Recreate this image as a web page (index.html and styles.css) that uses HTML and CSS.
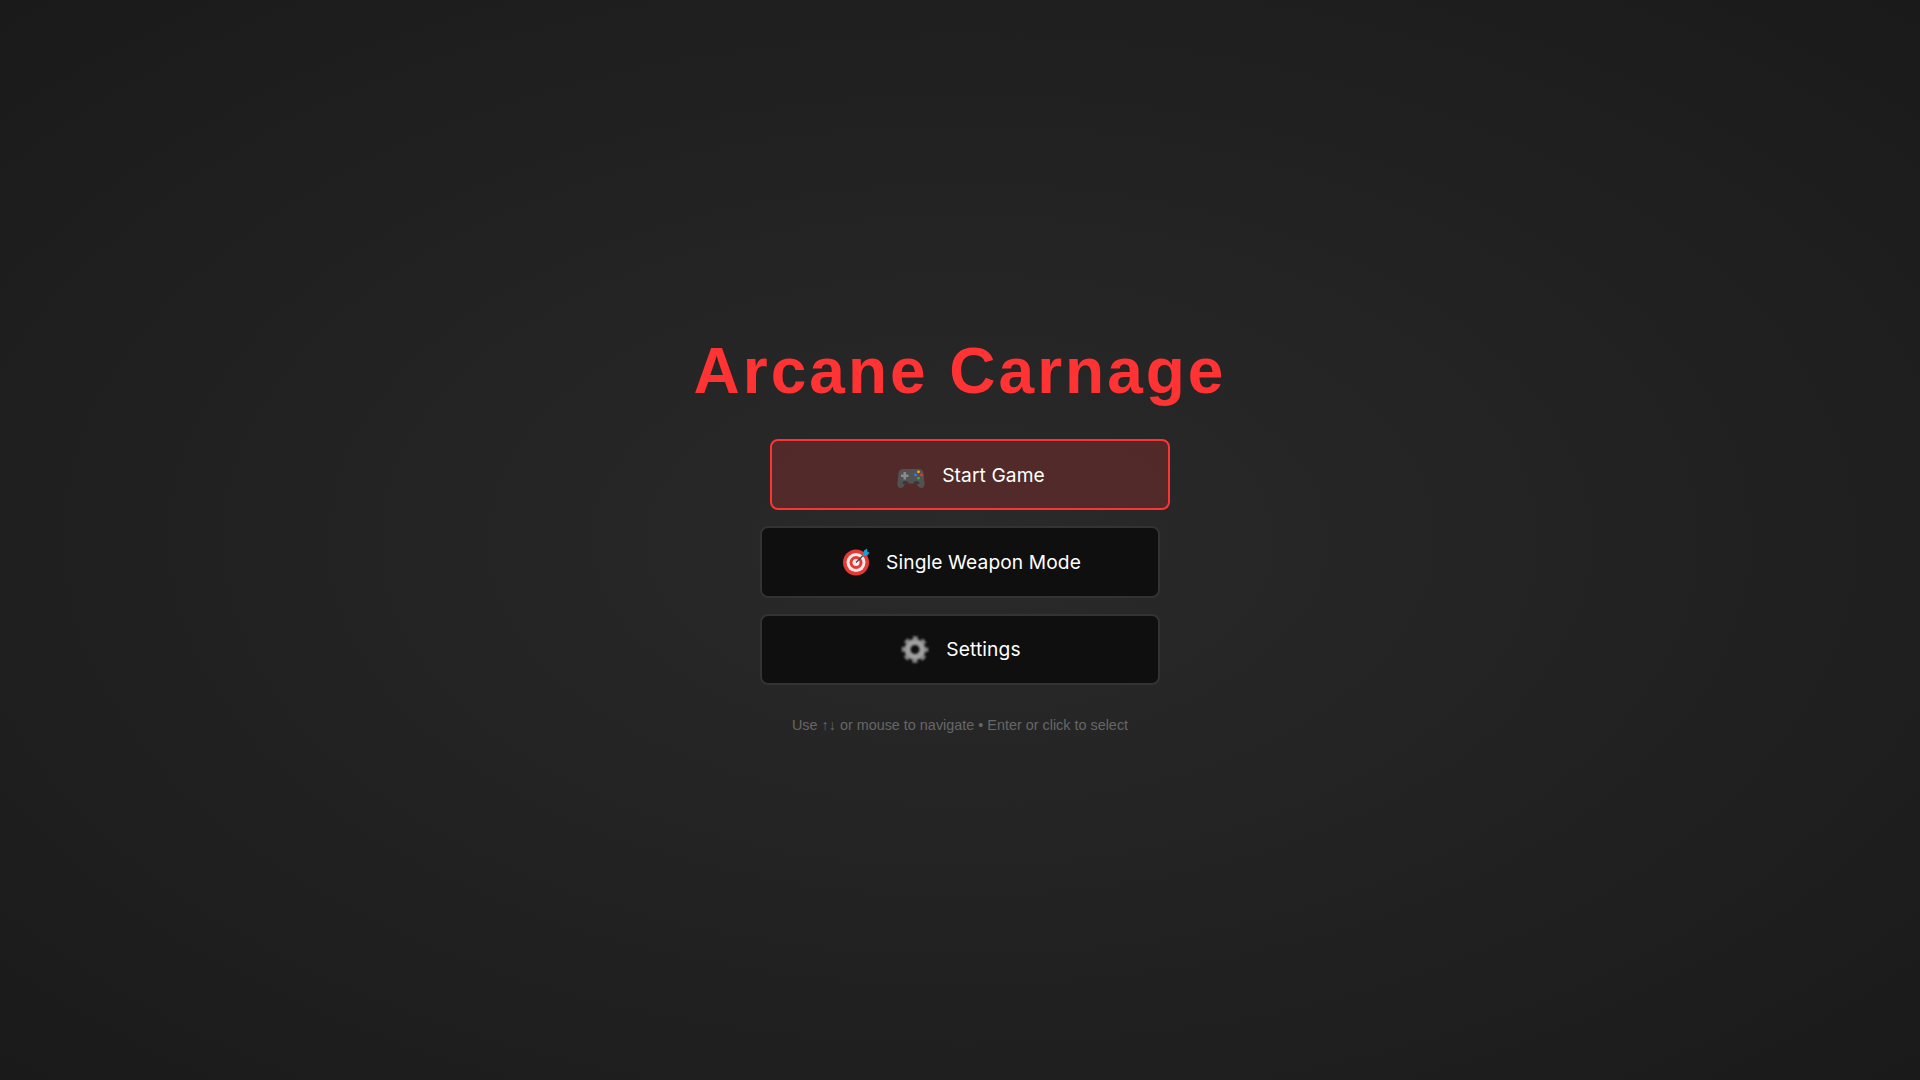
FILE: index.html
```html
<!DOCTYPE html>
<html lang="en">
<head>
    <meta charset="UTF-8">
    <meta name="viewport" content="width=device-width, initial-scale=1.0">
    <title>Arcane Carnage</title>
    <link rel="stylesheet" href="styles.css">
</head>
<body>
    <div class="menu-container">
        <h1 class="game-title">Arcane Carnage</h1>
        <div class="menu-list">
            <button class="menu-button selected">
                <svg class="menu-icon" viewBox="-2.500 0 31 28">
                    <path d="M17 9c0-3 1-5 5-7.500" fill="none" stroke="#3a3a3a" stroke-width="1"/>
                    <path d="M6 8h15c3 0 4.500 1.500 5 4l1 10c.3 3-1 5-3 5s-3-1-4-3c-.6-1-1.400-1.500-2.500-1.500h-8c-1.100 0-1.900.5-2.500 1.500-1 2-2 3-4 3s-3.300-2-3-5l1-10c.5-2.500 2-4 5-4z" fill="#525252"/>
                    <path d="M5 23a3 3 0 0 1 6 0M16 23a3 3 0 0 1 6 0" fill="#383838"/>
                    <path d="M6 11h2.500v2.500H11V16H8.500v2.500H6V16H3.500v-2.500H6z" fill="#8a8a8a"/>
                    <circle cx="21" cy="10.800" r="1.400" fill="#f4b400"/>
                    <circle cx="18" cy="14" r="1.400" fill="#2a7de1"/>
                    <circle cx="24" cy="14" r="1.400" fill="#e53935"/>
                    <circle cx="21" cy="17.200" r="1.400" fill="#43a047"/>
                </svg>
                Start Game
            </button>
            <button class="menu-button">
                <svg class="menu-icon" viewBox="-2.500 0 31 28">
                    <circle cx="14.500" cy="14.500" r="13" fill="#e53935"/>
                    <circle cx="14.500" cy="14.500" r="9.500" fill="#fbe9e7"/>
                    <circle cx="14.500" cy="14.500" r="6.500" fill="#e53935"/>
                    <circle cx="14.500" cy="14.500" r="3.500" fill="#fbe9e7"/>
                    <path d="M14.500 14.500L23 6" stroke="#37474f" stroke-width="1.200"/>
                    <path d="M20.500 8.500l2-6 3-2 .5 3.500 2 .5-2 3-5.500 1z" fill="#1e9ad6"/>
                </svg>
                Single Weapon Mode
            </button>
            <button class="menu-button">
                <svg class="menu-icon gear-icon" viewBox="-2 0 31 28">
                    <circle cx="14" cy="14.500" r="7.500" fill="none" stroke="#a0a0a0" stroke-width="6"/>
                    <circle cx="14" cy="14.500" r="11.500" fill="none" stroke="#8a8a8a" stroke-width="3.500" stroke-dasharray="5 4.030" stroke-dashoffset="2.500"/>
                </svg>
                Settings
            </button>
        </div>
        <p class="menu-hint">Use ↑↓ or mouse to navigate • Enter or click to select</p>
    </div>
</body>
</html>
```

FILE: styles.css
```css
html, body {
    height: 100%;
}
body {
    margin: 0;
    font-family: "Liberation Sans", Arial, sans-serif;
    background: radial-gradient(ellipse at center, #2a2a2a 0%, #1a1a1a 100%);
    display: flex;
    align-items: center;
    justify-content: center;
}
.menu-container {
    display: flex;
    flex-direction: column;
    align-items: center;
}
.game-title {
    margin: 0 0 31px;
    font-size: 64px;
    font-weight: bold;
    letter-spacing: 3px;
    color: #ff3333;
}
.menu-list {
    display: flex;
    flex-direction: column;
    gap: 16px;
}
.menu-button {
    width: 400px;
    height: 71.25px;
    display: flex;
    align-items: center;
    justify-content: center;
    gap: 16px;
    background-color: #0f0f0f;
    color: #fff;
    border: 2px solid #333;
    border-radius: 8px;
    font-family: Inter, sans-serif;
    font-size: 19.2px;
    font-weight: 400;
    letter-spacing: 0.1px;
    cursor: pointer;
}
.menu-button.selected {
    background-color: rgba(255, 51, 51, 0.2);
    border-color: #ff3333;
    transform: translateX(10px);
}
.menu-icon {
    width: 31px;
    height: 28px;
    flex-shrink: 0;
    filter: blur(0.3px);
}
.gear-icon {
    filter: blur(0.8px);
}
.menu-hint {
    margin: 32px 0 13px;
    font-size: 14.4px;
    color: #666;
}
```
